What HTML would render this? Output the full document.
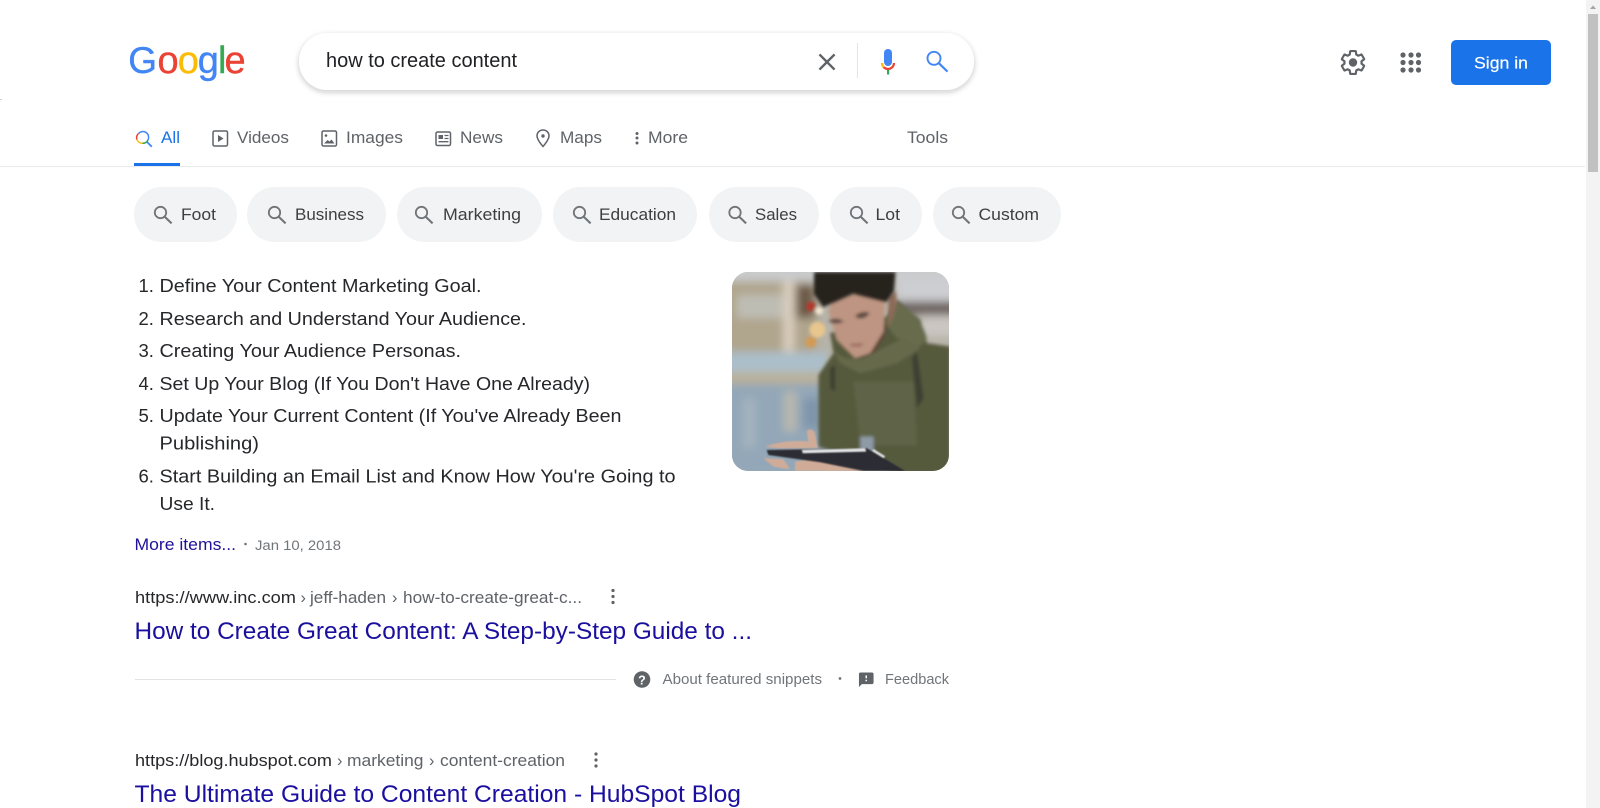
<!DOCTYPE html>
<html lang="en">
<head>
<meta charset="utf-8">
<title>how to create content - Google Search</title>
<style>
html,body{margin:0;padding:0;width:1600px;height:808px;overflow:hidden;background:#fff}
svg{display:block;position:absolute;left:0;top:0}
text{font-family:"Liberation Sans",Arial,sans-serif;white-space:pre}
.tab{font-size:17px;fill:#5f6368}
.chip{font-size:17px;fill:#3c4043}
.li{font-size:18.5px;fill:#26272a}
.link{font-size:24px;fill:#1a0f9f}
.cite{font-size:16.3px;fill:#26272a}
.crumb{font-size:16.3px;fill:#5f6368}
.foot{font-size:15px;fill:#70757a}
</style>
</head>
<body>
<svg width="1600" height="808" viewBox="0 0 1600 808" xmlns="http://www.w3.org/2000/svg">
<defs>
<g id="s" fill="none" stroke="#70757a" stroke-linecap="butt"><circle cx="6.500" cy="6.500" r="5.700" stroke-width="1.800"/><path d="M10.600 10.600l7 6.800" stroke-width="2.100"/></g>
<filter id="bl" x="-5%" y="-5%" width="110%" height="110%"><feGaussianBlur stdDeviation="5"/></filter>
<filter id="bm" x="-20%" y="-20%" width="140%" height="140%"><feGaussianBlur stdDeviation="8"/></filter>
<filter id="bs" x="-5%" y="-5%" width="110%" height="110%"><feGaussianBlur stdDeviation="13"/></filter>
<filter id="sh" x="-5%" y="-30%" width="110%" height="170%"><feDropShadow dx="0" dy="2" stdDeviation="3" flood-color="#202124" flood-opacity=".24"/></filter>
<clipPath id="ph"><rect x="36" y="22" width="650" height="596" rx="48"/></clipPath>
</defs>

<rect width="1600" height="808" fill="#fff"/>
<rect x="0" y="99" width="2" height="1" fill="#cfcfcf"/>

<!-- logo -->
<g transform="translate(129.500,73)" font-size="38" stroke-width=".4">
<text><tspan x="-1.300" font-size="37" fill="#4285f4" stroke="#4285f4">G</tspan><tspan x="28" fill="#ea4335" stroke="#ea4335">o</tspan><tspan x="48.200" fill="#fbbc05" stroke="#fbbc05">o</tspan><tspan x="68.300" fill="#4285f4" stroke="#4285f4">g</tspan><tspan x="88.500" fill="#34a853" stroke="#34a853">l</tspan><tspan x="95" fill="#ea4335" stroke="#ea4335">e</tspan></text>
</g>

<!-- search box -->
<rect x="299" y="33" width="675" height="57" rx="28.500" fill="#fff" filter="url(#sh)"/>
<text x="326" y="67" font-size="20" fill="#202124" textLength="191" lengthAdjust="spacingAndGlyphs">how to create content</text>
<path transform="translate(812.600,47.600) scale(1.200)" fill="#5f6368" d="M19 6.410L17.590 5 12 10.590 6.410 5 5 6.410 10.590 12 5 17.590 6.410 19 12 13.410 17.590 19 19 17.590 13.410 12z"/>
<rect x="857" y="43" width="1" height="35" fill="#e3e5e8"/>
<!-- mic -->
<rect x="884" y="49" width="8" height="17" rx="4" fill="#4285f4"/>
<path d="M882 63c0 1.600.6 3 1.700 4.200" fill="none" stroke="#fbbc05" stroke-width="2.200"/>
<path d="M883.700 67.200c1.100 1.100 2.600 1.800 4.300 1.800s3.200-.7 4.300-1.800c1.100-1.200 1.700-2.600 1.700-4.200" fill="none" stroke="#ea4335" stroke-width="2.200"/>
<rect x="887" y="70" width="2.200" height="4.500" fill="#34a853"/>
<!-- main search -->
<g fill="none" stroke="#4285f4"><circle cx="934" cy="58.300" r="6.500" stroke-width="1.900"/><path d="M939 63.300l8.500 8.300" stroke-width="2.200"/></g>

<!-- gear -->
<g transform="translate(1353,62.500) scale(1.240) translate(-12,-12)">
<path transform="translate(12,12) scale(.92) translate(-12,-12)" fill="none" stroke="#5f6368" stroke-width="1.900" stroke-linejoin="round" d="M19.430 12.980c.04-.32.07-.64.07-.98s-.03-.66-.07-.98l2.110-1.650c.19-.15.24-.42.12-.64l-2-3.460c-.12-.22-.39-.3-.61-.22l-2.490 1c-.52-.4-1.080-.73-1.690-.98l-.38-2.650C14.460 2.180 14.250 2 14 2h-4c-.25 0-.46.18-.49.42l-.38 2.650c-.61.25-1.170.59-1.690.98l-2.490-1c-.23-.09-.49 0-.61.22l-2 3.460c-.13.22-.07.49.12.64l2.110 1.650c-.04.32-.07.65-.07.98s.03.66.07.98l-2.110 1.650c-.19.15-.24.42-.12.64l2 3.460c.12.22.39.3.61.22l2.490-1c.52.4 1.080.73 1.690.98l.38 2.650c.03.24.24.42.49.42h4c.25 0 .46-.18.49-.42l.38-2.650c.61-.25 1.170-.59 1.690-.98l2.490 1c.23.09.49 0 .61-.22l2-3.460c.12-.22.07-.49-.12-.64l-2.110-1.650z"/>
<circle cx="12" cy="12" r="3.400" fill="#5f6368"/>
</g>

<!-- apps -->
<g fill="#5f6368">
<circle cx="1403" cy="55" r="2.600"/><circle cx="1411" cy="55" r="2.600"/><circle cx="1418.500" cy="55" r="2.600"/>
<circle cx="1403" cy="62.500" r="2.600"/><circle cx="1411" cy="62.500" r="2.600"/><circle cx="1418.500" cy="62.500" r="2.600"/>
<circle cx="1403" cy="70" r="2.600"/><circle cx="1411" cy="70" r="2.600"/><circle cx="1418.500" cy="70" r="2.600"/>
</g>

<!-- sign in -->
<rect x="1451" y="40" width="100" height="45" rx="5" fill="#1a73e8"/>
<text x="1474" y="68.500" font-size="17" fill="#fff" stroke="#fff" stroke-width=".2" textLength="54" lengthAdjust="spacingAndGlyphs">Sign in</text>

<!-- scrollbar -->
<rect x="1586" y="0" width="14" height="808" fill="#f3f3f3"/>
<path d="M1590 9l3-3.500 3 3.500z" fill="#a3a3a3"/>
<rect x="1588" y="14" width="10" height="158" fill="#c1c1c1"/>

<!-- tabs -->
<rect x="0" y="166" width="1585" height="1" fill="#ebebeb"/>
<rect x="134" y="163" width="46" height="3" fill="#1a73e8"/>
<g fill="none" stroke-width="1.500">
<path d="M148 140A5.800 5.800 0 0 0 138.500 133.500" stroke="#4285f4"/>
<path d="M138.500 133.500a5.800 5.800 0 0 0-1.600 6" stroke="#ea4335"/>
<path d="M136.900 139.500a5.800 5.800 0 0 0 5.600 3.800" stroke="#fbbc05"/>
<path d="M142.500 143.300a5.800 5.800 0 0 0 5.500-3.300" stroke="#34a853"/>
<path d="M146.800 141.700l5 5" stroke="#4285f4" stroke-width="1.800"/>
</g>
<text x="161" y="143" class="tab" style="fill:#1a73e8" textLength="19" lengthAdjust="spacingAndGlyphs">All</text>

<rect x="213" y="131" width="14.500" height="15" rx="1.500" fill="none" stroke="#5f6368" stroke-width="1.500"/>
<path d="M218 135v7l5.500-3.500z" fill="#5f6368"/>
<text x="237" y="143" class="tab" textLength="52" lengthAdjust="spacingAndGlyphs">Videos</text>

<rect x="322" y="131" width="14.500" height="15" rx="1.500" fill="none" stroke="#5f6368" stroke-width="1.500"/>
<circle cx="326" cy="135.500" r="1.300" fill="#5f6368"/>
<path d="M324 143.500l3.500-3.500 2 1.500 2-2 3 4z" fill="#5f6368"/>
<text x="346" y="143" class="tab" textLength="57" lengthAdjust="spacingAndGlyphs">Images</text>

<rect x="436" y="132" width="14.500" height="13.500" rx="1.500" fill="none" stroke="#5f6368" stroke-width="1.500"/>
<rect x="438.500" y="135" width="4.500" height="4" fill="#5f6368"/>
<path d="M444.500 135.500h4M444.500 138.500h4M438.500 141.700h10" stroke="#5f6368" stroke-width="1.300"/>
<text x="460" y="143" class="tab" textLength="43" lengthAdjust="spacingAndGlyphs">News</text>

<path d="M543 130c-3.500 0-6 2.600-6 5.800 0 4.200 6 10.700 6 10.700s6-6.500 6-10.700c0-3.200-2.500-5.800-6-5.800z" fill="none" stroke="#5f6368" stroke-width="1.500"/>
<circle cx="543" cy="136" r="1.700" fill="#5f6368"/>
<text x="560" y="143" class="tab" textLength="42" lengthAdjust="spacingAndGlyphs">Maps</text>

<g fill="#5f6368"><circle cx="637" cy="133.500" r="1.500"/><circle cx="637" cy="138" r="1.500"/><circle cx="637" cy="143" r="1.500"/></g>
<text x="648" y="143" class="tab" textLength="40" lengthAdjust="spacingAndGlyphs">More</text>
<text x="907" y="143" class="tab" textLength="41" lengthAdjust="spacingAndGlyphs">Tools</text>

<!-- chips -->
<g fill="#f1f3f4">
<rect x="134" y="187" width="103" height="55" rx="27.500"/>
<rect x="247" y="187" width="139" height="55" rx="27.500"/>
<rect x="397" y="187" width="145" height="55" rx="27.500"/>
<rect x="553" y="187" width="144" height="55" rx="27.500"/>
<rect x="709" y="187" width="110" height="55" rx="27.500"/>
<rect x="830" y="187" width="92" height="55" rx="27.500"/>
<rect x="933" y="187" width="128" height="55" rx="27.500"/>
</g>
<use href="#s" transform="translate(154,206)"/>
<use href="#s" transform="translate(268,206)"/>
<use href="#s" transform="translate(415,206)"/>
<use href="#s" transform="translate(573,206)"/>
<use href="#s" transform="translate(728.500,206)"/>
<use href="#s" transform="translate(850,206)"/>
<use href="#s" transform="translate(952,206)"/>
<text x="181" y="220" class="chip" textLength="35" lengthAdjust="spacingAndGlyphs">Foot</text>
<text x="295" y="220" class="chip" textLength="69" lengthAdjust="spacingAndGlyphs">Business</text>
<text x="443" y="220" class="chip" textLength="78" lengthAdjust="spacingAndGlyphs">Marketing</text>
<text x="599" y="220" class="chip" textLength="77" lengthAdjust="spacingAndGlyphs">Education</text>
<text x="755" y="220" class="chip" textLength="42" lengthAdjust="spacingAndGlyphs">Sales</text>
<text x="875.500" y="220" class="chip" textLength="24.500" lengthAdjust="spacingAndGlyphs">Lot</text>
<text x="978.500" y="220" class="chip" textLength="60.500" lengthAdjust="spacingAndGlyphs">Custom</text>

<!-- list -->
<text x="138.500" y="292" class="li">1.</text>
<text x="159.500" y="292" class="li" textLength="322" lengthAdjust="spacingAndGlyphs">Define Your Content Marketing Goal.</text>
<text x="138.500" y="325" class="li">2.</text>
<text x="159.500" y="325" class="li" textLength="367" lengthAdjust="spacingAndGlyphs">Research and Understand Your Audience.</text>
<text x="138.500" y="357" class="li">3.</text>
<text x="159.500" y="357" class="li" textLength="301.500" lengthAdjust="spacingAndGlyphs">Creating Your Audience Personas.</text>
<text x="138.500" y="390" class="li">4.</text>
<text x="159.500" y="390" class="li" textLength="430.500" lengthAdjust="spacingAndGlyphs">Set Up Your Blog (If You Don't Have One Already)</text>
<text x="138.500" y="422" class="li">5.</text>
<text x="159.500" y="422" class="li" textLength="462" lengthAdjust="spacingAndGlyphs">Update Your Current Content (If You've Already Been</text>
<text x="159.500" y="449.500" class="li" textLength="99.500" lengthAdjust="spacingAndGlyphs">Publishing)</text>
<text x="138.500" y="482.500" class="li">6.</text>
<text x="159.500" y="482.500" class="li" textLength="516" lengthAdjust="spacingAndGlyphs">Start Building an Email List and Know How You're Going to</text>
<text x="159.500" y="510" class="li" textLength="55.500" lengthAdjust="spacingAndGlyphs">Use It.</text>

<text x="134.500" y="550" font-size="16.500" fill="#1f1299" textLength="101.500" lengthAdjust="spacingAndGlyphs">More items...</text>
<circle cx="245.500" cy="544" r="1.300" fill="#70757a"/>
<text x="255" y="550" font-size="14.200" fill="#70757a" textLength="86" lengthAdjust="spacingAndGlyphs">Jan 10, 2018</text>

<!-- photo -->
<svg x="732" y="272" width="217" height="199" viewBox="36 22 650 596">
<g clip-path="url(#ph)">
<rect x="36" y="22" width="650" height="596" fill="#b6b3a8"/>
<g filter="url(#bs)">
<rect x="0" y="0" width="720" height="50" fill="#c9cbcc"/>
<rect x="0" y="50" width="290" height="210" fill="#b0a58d"/>
<rect x="50" y="90" width="140" height="70" fill="#bebdb4"/>
<rect x="190" y="50" width="32" height="210" fill="#dacfbf"/>
<rect x="228" y="60" width="55" height="100" fill="#6d5a4a"/>
<rect x="525" y="40" width="190" height="70" fill="#cdced2"/>
<rect x="525" y="110" width="190" height="40" fill="#6b625d"/>
<rect x="600" y="155" width="110" height="60" fill="#cbc6c2"/>
<rect x="0" y="262" width="320" height="60" fill="#abbfcb"/>
<rect x="0" y="322" width="320" height="35" fill="#bbb19a"/>
<rect x="0" y="357" width="320" height="280" fill="#93a7b8"/>
<rect x="190" y="380" width="40" height="120" fill="#b7b7ae"/>
<rect x="70" y="400" width="36" height="150" fill="#a5b3bd"/>
<rect x="250" y="400" width="50" height="90" fill="#7f94aa"/>
</g>
<g filter="url(#bl)">
<circle cx="272" cy="125" r="14" fill="#b5392c"/>
<circle cx="297" cy="138" r="12" fill="#f0e3cf"/>
<circle cx="292" cy="195" r="24" fill="#e8c68d"/>
<circle cx="272" cy="232" r="16" fill="#d49a52"/>
<path d="M530 105l70 60 20 70 70 10v380H540l-110-30-135-50V330l45-65-10-60 170-50z" fill="#565a3e"/>
<path d="M525 110c40 20 85 60 95 115l-35 30-60-40-30-40z" fill="#686c4e"/>
<path d="M335 250c30 40 90 45 125 15l90-45 50 30-70 45-110 30-60-30z" fill="#666a4c"/>
<path d="M400 350h180l10 190H420z" fill="#5f6347"/>
<path d="M590 260l20 140-20 30-15-150zM345 300v80l-15-10v-60z" fill="#3e4030"/>
<path d="M420 515h40v50h-40z" fill="#8e9aa6"/>
<path d="M505 170l-15 50-30 45-50 15 70-75z" fill="#5d4236"/>
<path d="M495 100l-5 100-40 65-45 15-55-55-25-85 15-50 130-15z" fill="#bd9582"/>
</g>
<g filter="url(#bl)">
<path d="M325 168c15-8 35-6 45 3-15 6-35 6-45-3zM405 155c12-12 30-15 42-10-8 14-28 20-42 10z" fill="#4d3c37" opacity=".85"/>
<path d="M388 238l42-3-8 10h-26z" fill="#96605a" opacity=".8"/>
<path d="M505 95l22-15 3 40-12 40-15 30z" fill="#8d6a58"/>
</g>
<g filter="url(#bl)">
<path d="M282 22h244l-5 58-22 32-100-25-90 40-28-40z" fill="#27211f"/>
</g>
<g style="filter:blur(2px)">
<path d="M135 545c40-15 90-20 130-15l-5-30c5-10 22-10 25 10l8 40H170zM130 580l30 25 50 8-20-30zM225 590l50-8 170 18v18H225z" fill="#d0ac98"/>
<path d="M140 555l300-5 115 68H430l-130-26-155-22z" fill="#2c2d34"/>
<path d="M245 555l190-5 3 10-190 5zM460 552l35 22-5 6-35-22z" fill="#e2e4e6"/>
</g>
</g>
</svg>

<!-- result 1 -->
<text x="135" y="603" class="cite" textLength="161" lengthAdjust="spacingAndGlyphs">https://www.inc.com</text>
<text x="300.500" y="603" class="crumb">›</text>
<text x="310" y="603" class="crumb" textLength="76" lengthAdjust="spacingAndGlyphs">jeff-haden</text>
<text x="392" y="603" class="crumb">›</text>
<text x="403" y="603" class="crumb" textLength="179" lengthAdjust="spacingAndGlyphs">how-to-create-great-c...</text>
<g fill="#5f6368"><circle cx="613" cy="590.500" r="1.600"/><circle cx="613" cy="596.500" r="1.600"/><circle cx="613" cy="602.500" r="1.600"/></g>
<text x="134.500" y="639" class="link" textLength="617.500" lengthAdjust="spacingAndGlyphs">How to Create Great Content: A Step-by-Step Guide to ...</text>

<rect x="135" y="679" width="481" height="1" fill="#e2e3e5"/>
<circle cx="642" cy="679.500" r="8.300" fill="#5f6368"/>
<text x="642" y="684.500" font-size="12.500" font-weight="bold" fill="#fff" text-anchor="middle">?</text>
<text x="662.500" y="684" class="foot" textLength="159.500" lengthAdjust="spacingAndGlyphs">About featured snippets</text>
<circle cx="840" cy="678.500" r="1.400" fill="#70757a"/>
<path transform="translate(857.500,671) scale(.73)" fill="#5f6368" d="M20 2H4c-1.100 0-1.990.9-1.990 2L2 22l4-4h14c1.100 0 2-.9 2-2V4c0-1.100-.9-2-2-2zm-7 12h-2v-2h2v2zm0-4h-2V6h2v4z"/>
<text x="885" y="684" class="foot" textLength="64" lengthAdjust="spacingAndGlyphs">Feedback</text>

<!-- result 2 -->
<text x="135" y="766" class="cite" textLength="197" lengthAdjust="spacingAndGlyphs">https://blog.hubspot.com</text>
<text x="337" y="766" class="crumb">›</text>
<text x="347" y="766" class="crumb" textLength="76.500" lengthAdjust="spacingAndGlyphs">marketing</text>
<text x="429" y="766" class="crumb">›</text>
<text x="440" y="766" class="crumb" textLength="125" lengthAdjust="spacingAndGlyphs">content-creation</text>
<g fill="#5f6368"><circle cx="596" cy="754" r="1.600"/><circle cx="596" cy="760" r="1.600"/><circle cx="596" cy="766" r="1.600"/></g>
<text x="134.500" y="802" class="link" textLength="606.500" lengthAdjust="spacingAndGlyphs">The Ultimate Guide to Content Creation - HubSpot Blog</text>
</svg>
</body>
</html>
